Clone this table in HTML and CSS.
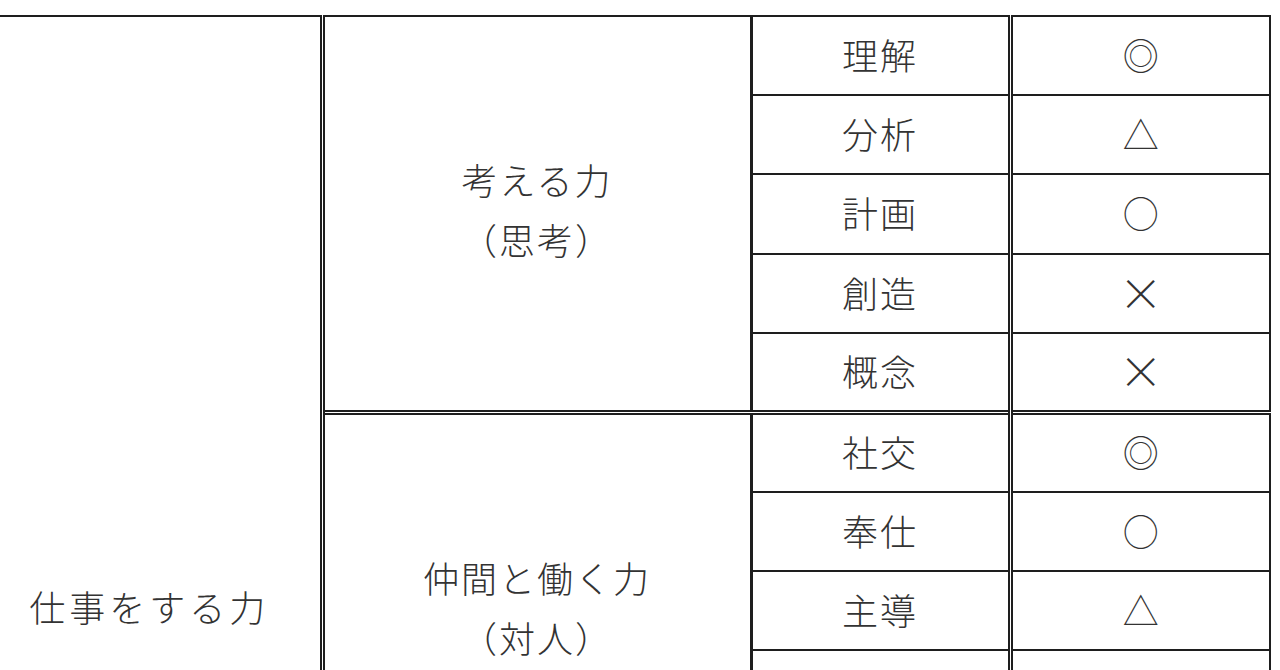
FILE: index.html
```html
<!DOCTYPE html>
<html lang="ja">
<head>
<meta charset="utf-8">
<title>仕事をする力</title>
<link rel="stylesheet" href="styles.css">
</head>
<body>
<table class="matrix">
  <colgroup>
    <col class="c-main">
    <col class="c-group">
    <col class="c-item">
    <col class="c-mark">
  </colgroup>
  <tbody>
    <tr>
      <td class="main" rowspan="15">仕事をする力</td>
      <td class="group" rowspan="5">考える力<br>（思考）</td>
      <td class="item">理解</td>
      <td class="mark">◎</td>
    </tr>
    <tr><td class="item">分析</td><td class="mark">△</td></tr>
    <tr><td class="item">計画</td><td class="mark">○</td></tr>
    <tr><td class="item">創造</td><td class="mark cross">×</td></tr>
    <tr><td class="item">概念</td><td class="mark cross">×</td></tr>
    <tr class="group-start">
      <td class="group" rowspan="5">仲間と働く力<br>（対人）</td>
      <td class="item">社交</td>
      <td class="mark">◎</td>
    </tr>
    <tr><td class="item">奉仕</td><td class="mark">○</td></tr>
    <tr><td class="item">主導</td><td class="mark">△</td></tr>
    <tr><td class="item">協調</td><td class="mark">○</td></tr>
    <tr><td class="item">発信</td><td class="mark">△</td></tr>
    <tr class="group-start">
      <td class="group" rowspan="5">自分を動かす力<br>（自己）</td>
      <td class="item">感情</td>
      <td class="mark">○</td>
    </tr>
    <tr><td class="item">行動</td><td class="mark">◎</td></tr>
    <tr><td class="item">意思</td><td class="mark">○</td></tr>
    <tr><td class="item">自信</td><td class="mark">△</td></tr>
    <tr><td class="item">学習</td><td class="mark">○</td></tr>
  </tbody>
</table>
</body>
</html>
```

FILE: styles.css
```css
html, body {
  margin: 0;
  padding: 0;
  background: #ffffff;
}

body {
  font-family: "Noto Sans CJK JP", "Noto Sans", sans-serif;
  color: #333333;
  overflow-x: hidden;
}

.matrix {
  border-collapse: collapse;
  table-layout: fixed;
  width: 1296px;
  margin: 15px 0 40px -26px;
  border-top: 2px solid #1e1e1e;
  border-right: 2px solid #1e1e1e;
}

.c-main { width: 348px; }
.c-group { width: 429px; }
.c-item { width: 259px; }
.c-mark { width: 260px; }

.matrix tr {
  height: 79px;
}

.matrix tr:nth-child(3n) {
  height: 80px;
}

.matrix td {
  padding: 0 0 4px 0;
  text-align: center;
  vertical-align: middle;
  font-size: 36px;
  font-weight: 300;
  letter-spacing: 2px;
  line-height: 60px;
}

.matrix td.main {
  border-right: 5px double #1e1e1e;
  letter-spacing: 4px;
  padding: 0 0 12px 5px;
}

.matrix td.group {
  border-right: 3px solid #1e1e1e;
  padding-bottom: 8px;
}

.matrix td.item {
  border-right: 5px double #1e1e1e;
  border-bottom: 2px solid #1e1e1e;
}

.matrix td.mark {
  border-bottom: 2px solid #1e1e1e;
  letter-spacing: 0;
}

.matrix td.cross {
  font-size: 44px;
}

.group-start td {
  border-top: 5px double #1e1e1e;
}
```
